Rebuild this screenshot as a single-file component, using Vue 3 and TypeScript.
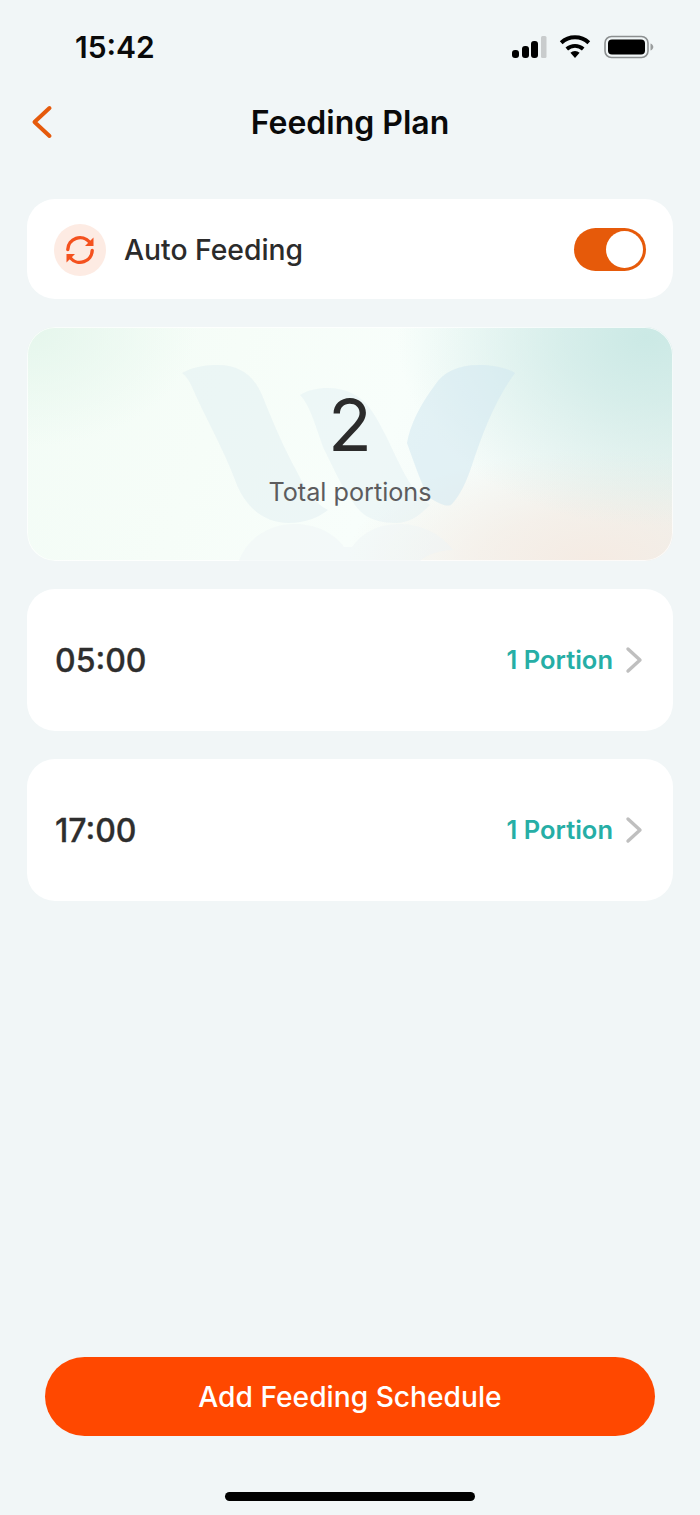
<script setup lang="ts">
interface Plan { time: string; portion: string }
const plans: Plan[] = [
  { time: '05:00', portion: '1 Portion' },
  { time: '17:00', portion: '1 Portion' },
]
</script>

<template>
  <div class="page">
    <div class="status">
      <span class="clock">15:42</span>
      <div class="status-icons">
        <svg width="36" height="24" viewBox="0 0 36 24">
          <rect x="1" y="15" width="7" height="8" rx="3" fill="#000" />
          <rect x="11" y="11" width="7" height="12" rx="3" fill="#000" />
          <rect x="20" y="6" width="7" height="17" rx="3" fill="#000" />
          <rect x="30" y="1" width="5.500" height="22" rx="1.500" fill="#c9cccd" />
        </svg>
        <svg width="32" height="24" viewBox="0 0 32 24">
          <path d="M16 23l-4.600-5.200a6.600 6.600 0 0 1 9.200 0z" fill="#000" />
          <path d="M7.800 14a12.200 12.200 0 0 1 16.400 0" fill="none" stroke="#000" stroke-width="3.800" />
          <path d="M2.200 7.800a20.200 20.200 0 0 1 27.600 0" fill="none" stroke="#000" stroke-width="4" />
        </svg>
        <svg width="50" height="24" viewBox="0 0 50 24">
          <rect x="1" y="1.500" width="43" height="21" rx="6.500" fill="none" stroke="#8c8f90" stroke-width="1.600" />
          <rect x="4" y="4.500" width="37" height="15" rx="4" fill="#000" />
          <path d="M46.500 8.500c1.800.6 2.800 2 2.800 3.500s-1 2.900-2.800 3.500z" fill="#9a9d9e" />
        </svg>
      </div>
    </div>

    <header class="nav">
      <svg class="back" width="24" height="36" viewBox="0 0 24 36">
        <path d="M19.500 4 4.500 18l15 14" fill="none" stroke="#e55a0c" stroke-width="4" stroke-linecap="round" stroke-linejoin="round" />
      </svg>
      <h1>Feeding Plan</h1>
    </header>

    <main class="content">
      <section class="card auto">
        <div class="auto-icon">
          <svg width="32" height="32" viewBox="0 0 32 32" fill="none" stroke="#f4511e" stroke-width="3.400" stroke-linecap="round">
            <path d="M3.800 15.500A12.300 12.300 0 0 1 25.500 8" />
            <path d="M28.200 16.500A12.300 12.300 0 0 1 6.500 24" />
            <path d="M29.500 3.500v8.500h-8.500z" fill="#f4511e" stroke="none" />
            <path d="M2.500 28.500V20h8.500z" fill="#f4511e" stroke="none" />
          </svg>
        </div>
        <span class="auto-label">Auto Feeding</span>
        <div class="toggle"><span class="knob"></span></div>
      </section>

      <section class="hero">
        <svg class="mark" viewBox="27 327 646 234" fill="none">
          <path d="M182 373C195 366 206 365 218 365C240 365 254 376 262 395C274 425 285 450 296 470C305 488 316 505 328 510C318 518 304 523 289 523C262 523 244 505 235 480C224 450 204 415 192 387C189 380 186 376 182 373Z" fill="#dcebf1" fill-opacity=".4" />
          <path d="M300 395C308 390 318 388 327 388C347 388 360 396 369 407C382 425 390 445 399 463C407 480 416 495 430 505C420 515 410 523 396 523C378 523 364 518 355 505C342 488 332 465 323 447C315 425 310 405 300 395Z" fill="#dfeef2" fill-opacity=".4" />
          <path d="M515 373C505 367 492 365 479 365C458 365 443 372 435 385C420 405 410 425 407 443C413 460 420 480 428 497C440 504 448 508 452 504C460 495 466 483 472 465C482 435 495 400 515 373Z" fill="#d2e7f0" fill-opacity=".55" />
          <path d="M239 561C246 540 268 524 294 524C316 524 334 533 344 547L352 547C362 533 378 524 399 524C423 524 443 536 453 550C440 550 428 554 420 561Z" fill="#edf5f6" fill-opacity=".45" />
        </svg>
        <div class="hero-num">2</div>
        <div class="hero-label">Total portions</div>
      </section>

      <section v-for="p in plans" :key="p.time" class="card row">
        <span class="time">{{ p.time }}</span>
        <span class="portion">{{ p.portion }}</span>
        <svg class="chev" width="18" height="28" viewBox="0 0 18 28">
          <path d="M3 3l12 11L3 25" fill="none" stroke="#bfbfbf" stroke-width="3.400" stroke-linecap="round" stroke-linejoin="round" />
        </svg>
      </section>
    </main>

    <footer class="foot">
      <button class="add" type="button">Add Feeding Schedule</button>
      <div class="home"></div>
    </footer>
  </div>
</template>

<style>
html, body { margin: 0; background: #f1f6f7; }
</style>

<style scoped>
.page {
  width: 700px;
  height: 1515px;
  background: #f1f6f7;
  display: flex;
  flex-direction: column;
  font-family: Inter, "Liberation Sans", sans-serif;
  color: #2b2b2b;
  overflow: hidden;
}
.status {
  height: 94px;
  flex: none;
  display: flex;
  justify-content: space-between;
  align-items: center;
  padding: 0 46px 0 75px;
  box-sizing: border-box;
}
.clock { font-size: 30px; font-weight: 600; color: #0a0a0a; margin-top: -1px; }
.status-icons { display: flex; align-items: center; gap: 12px; margin-top: -1px; }
.status-icons svg:last-child { margin-left: 1px; }
.nav {
  height: 56px;
  flex: none;
  display: flex;
  align-items: center;
  justify-content: center;
  position: relative;
}
.back { position: absolute; left: 30px; top: 10px; }
h1 { margin: 0; font-size: 32px; font-weight: 600; color: #0a0a0a; }
.content {
  flex: 1;
  padding: 49px 27px 0;
  display: flex;
  flex-direction: column;
  gap: 28px;
}
.card { background: #fff; border-radius: 28px; display: flex; align-items: center; }
.auto { height: 100px; padding: 0 27px; box-sizing: border-box; }
.auto-icon {
  width: 52px;
  height: 52px;
  border-radius: 50%;
  background: #fdebe3;
  display: flex;
  align-items: center;
  justify-content: center;
  margin-top: 1px;
}
.auto-label { margin-left: 18px; font-size: 28.300px; font-weight: 500; flex: 1; margin-top: 1px; }
.toggle {
  width: 72px;
  height: 43px;
  border-radius: 22px;
  background: #e65a0a;
  position: relative;
}
.knob {
  position: absolute;
  right: 3px;
  top: 3px;
  width: 37px;
  height: 37px;
  border-radius: 50%;
  background: #fff;
}
.hero {
  height: 234px;
  border-radius: 28px;
  position: relative;
  overflow: hidden;
  box-sizing: border-box;
  display: flex;
  flex-direction: column;
  align-items: center;
  box-shadow: inset 0 0 0 1px rgba(255, 255, 255, .75);
  background:
    radial-gradient(250px 190px at 96% 4%, #cbe9e5 0%, rgba(203,233,229,.7) 35%, rgba(203,233,229,0) 100%),
    radial-gradient(250px 110px at 88% 100%, #f5ebe3 0%, rgba(245,235,227,.65) 45%, rgba(245,235,227,0) 100%),
    radial-gradient(170px 120px at 0% 0%, #e5f6ec 0%, rgba(229,246,236,0) 100%),
    linear-gradient(110deg, #f3fcf6 0%, #f6fdf8 30%, #f8fefb 55%, #f4faf8 78%, #ecf4f1 100%);
}
.mark { position: absolute; inset: 0; width: 100%; height: 100%; }
.hero-num { position: relative; font-size: 72px; line-height: 87px; font-weight: 400; margin-top: 54px; color: #2b2b2b; }
.hero-label { position: relative; font-size: 25.200px; line-height: 30px; color: #5c5c5e; margin-top: 9px; }
.row { height: 142px; padding: 0 30px 0 28px; box-sizing: border-box; }
.time { flex: 1; font-size: 32px; font-weight: 500; color: #2e2e2e; -webkit-text-stroke: .3px #2e2e2e; }
.portion { font-size: 25.500px; font-weight: 600; color: #26aea6; margin-top: -1px; }
.chev { margin-left: 12px; }
.foot {
  flex: none;
  display: flex;
  flex-direction: column;
  align-items: center;
  padding-bottom: 14px;
}
.add {
  width: 610px;
  height: 79px;
  border: 0;
  border-radius: 40px;
  background: #ff4800;
  color: #fff;
  font-family: inherit;
  font-size: 28.200px;
  font-weight: 500;
}
.home { width: 250px; height: 9px; border-radius: 5px; background: #000; margin-top: 56px; }
</style>
